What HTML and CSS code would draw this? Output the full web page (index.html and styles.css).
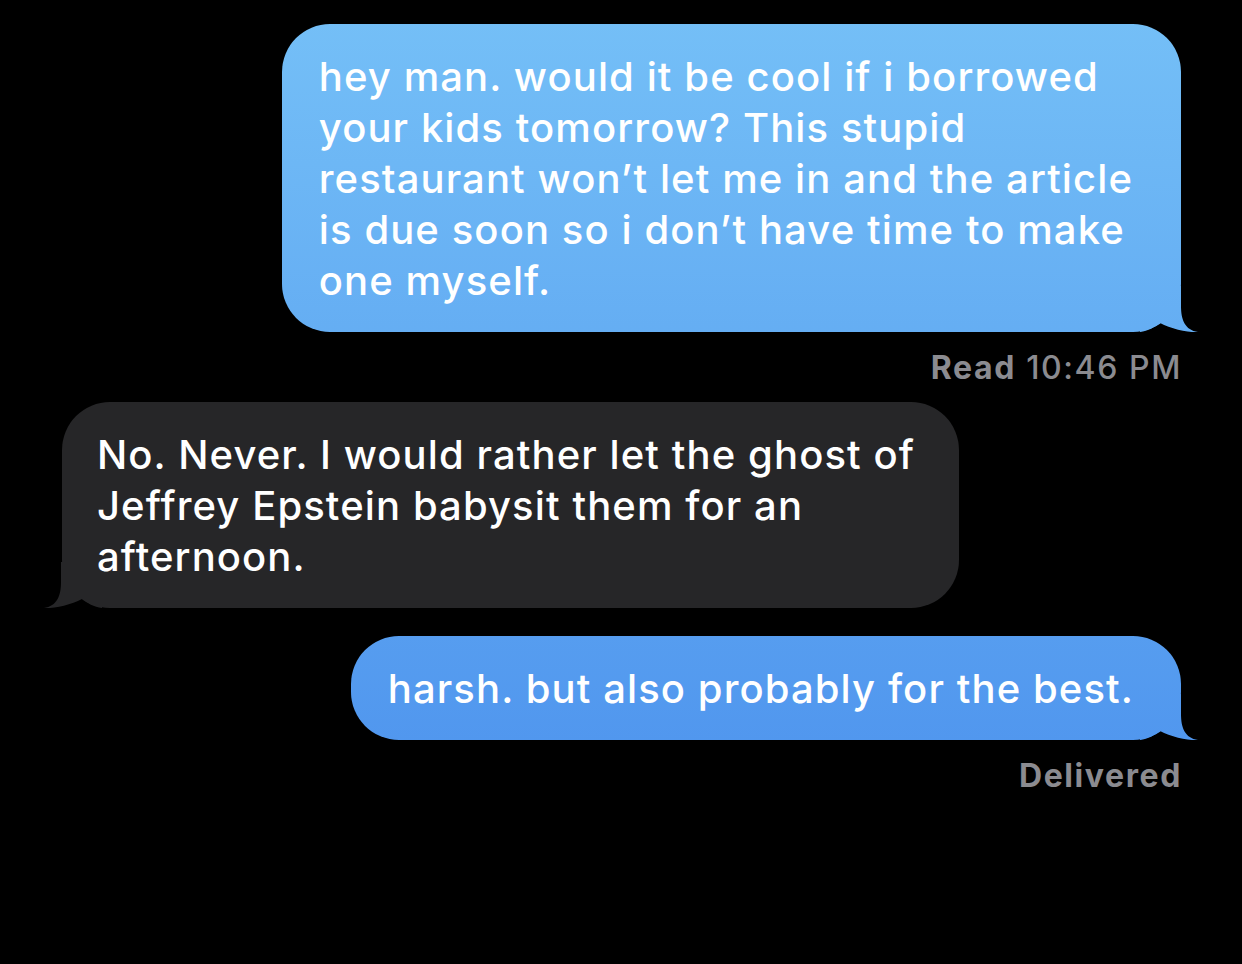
FILE: index.html
```html
<!DOCTYPE html>
<html>
<head>
<meta charset="utf-8">
<link rel="stylesheet" href="styles.css">
</head>
<body>
<div class="thread">
  <div class="bubble sent b1">hey man. would it be cool if i borrowed<br>your kids tomorrow? This stupid<br>restaurant won’t let me in and the article<br>is due soon so i don’t have time to make<br>one myself.<span class="tail"></span></div>
  <div class="meta m1"><b>Read</b> 10:46 PM</div>
  <div class="bubble recv b2">No. Never. I would rather let the ghost of<br>Jeffrey Epstein babysit them for an<br>afternoon.<span class="tail"></span></div>
  <div class="bubble sent b3">harsh. but also probably for the best.<span class="tail"></span></div>
  <div class="meta m2"><b>Delivered</b></div>
</div>
</body>
</html>
```
FILE: styles.css
```css
html, body {
  margin: 0;
  background: #000;
  height: 100%;
}
.thread {
  display: flex;
  flex-direction: column;
  padding: 24px 61px 0 62px;
  font-family: Inter, "Noto Sans", sans-serif;
}
.bubble {
  position: relative;
  isolation: isolate;
  color: #fff;
  font-size: 40px;
  font-weight: 500;
  line-height: 51px;
  letter-spacing: 1.1px;
  padding: 27px 47px 26px 37px;
  border-radius: 48px;
  white-space: nowrap;
  width: fit-content;
  box-sizing: border-box;
}
.b1 { padding-right: 48px; }
.sent {
  align-self: flex-end;
  background: linear-gradient(180deg, #75c0f7 0px, #5096ee 760px, #4a8fee 964px);
  background-attachment: fixed;
}
.recv {
  align-self: flex-start;
  background: #262628;
  padding: 27px 44px 26px 35px;
}
.tail {
  position: absolute;
  z-index: -1;
  bottom: 0;
  width: 58px;
  height: 46px;
}
.sent .tail {
  right: -17px;
  background: linear-gradient(180deg, #75c0f7 0px, #5096ee 760px, #4a8fee 964px);
  background-attachment: fixed;
  clip-path: path('M41 0 L41 20 C41 34 45 44 58 46 C48 46.5 31 43 20 37 C15 41 8 45 0 46 L0 0 Z');
}
.recv .tail {
  left: -18px;
  background: #262628;
  clip-path: path('M17 0 L17 20 C17 34 13 44 0 46 C10 46.5 27 43 38 37 C43 41 50 45 58 46 L58 0 Z');
}
.meta {
  align-self: flex-end;
  color: #8b8b90;
  font-size: 32px;
  line-height: 36px;
  font-weight: 500;
  letter-spacing: 1.6px;
  margin-right: -1px;
}
.meta b {
  font-weight: 700;
}
.m1 { margin-top: 18px; }
.b2 { margin-top: 16px; }
.b3 { margin-top: 28px; }
.m2 { margin-top: 18px; }
```
